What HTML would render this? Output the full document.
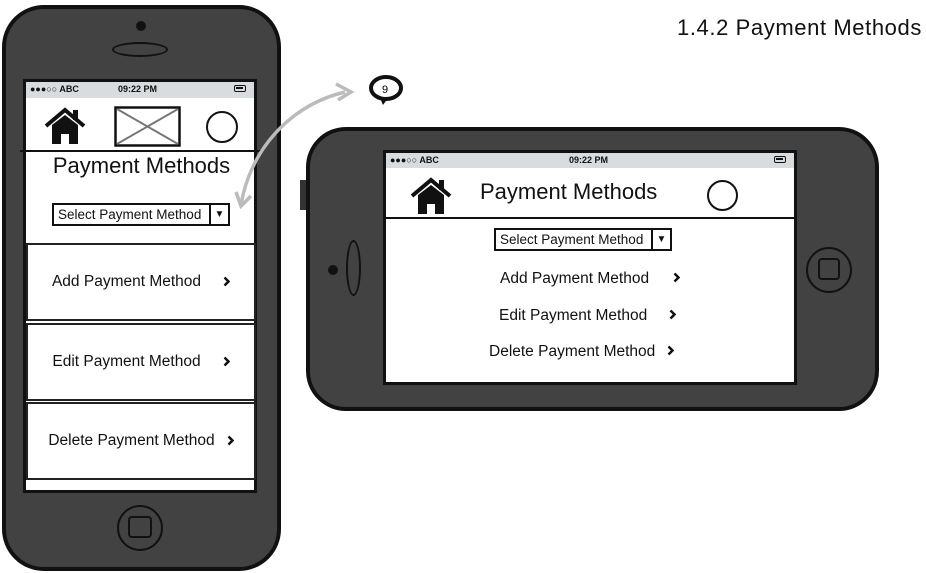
<!DOCTYPE html>
<html><head><meta charset="utf-8"><style>
body{margin:0;width:926px;height:573px;background:#fff;position:relative;overflow:hidden;font-family:"Liberation Sans",sans-serif;color:#111}
.a{position:absolute;box-sizing:border-box}
.phone{background:#424242;border:4px solid #111}
.scr{background:#fff;border:3px solid #111}
.sb{background:#d8dcdf;font-size:9px;line-height:15px;font-weight:bold}
.row{background:#fff;border:2px solid #222;font-size:15.5px;display:flex;align-items:center;justify-content:center}
.sel{border:2px solid #111;background:#fff;font-size:13.5px;line-height:19px;padding-left:4px}
.t{white-space:nowrap}
.c{display:inline-block;vertical-align:middle;position:relative;top:-1px}
</style></head><body>
<div class="a t" style="left:677px;top:15px;font-size:22px;letter-spacing:0.6px">1.4.2 Payment Methods</div>

<!-- portrait phone -->
<div class="a phone" style="left:2px;top:5px;width:279px;height:566px;border-radius:42px"></div>
<div class="a" style="left:136px;top:21px;width:10px;height:10px;border-radius:50%;background:#111"></div>
<div class="a" style="left:112px;top:42px;width:56px;height:15px;border-radius:50%;border:2.5px solid #111"></div>
<div class="a scr" style="left:23px;top:79px;width:234px;height:414px"></div>
<div class="a sb t" style="left:26px;top:82px;width:228px;height:16px;padding-left:4px">●●●○○ ABC<span style="position:absolute;left:92px">09:22 PM</span><span style="position:absolute;right:8px;top:3px;width:12px;height:7px;border:1.5px solid #111;border-radius:2px;box-sizing:border-box;background:linear-gradient(#111,#111) 1px 1px/7px 2px no-repeat"></span></div>
<svg class="a" style="left:43px;top:106px" width="45" height="40" viewBox="0 0 45 40"><path d="M3 20 L22 4 L41 20" stroke="#111" stroke-width="4" fill="none"/><path d="M9 19 L22 9 L35 19 V38 H26 V28 H18 V38 H9Z" fill="#111"/><rect x="30" y="4" width="5" height="10" fill="#111"/></svg>
<svg class="a" style="left:114px;top:106px" width="67" height="41"><rect x="1.5" y="1.5" width="64" height="38" fill="#fff" stroke="#111" stroke-width="2.5"/><path d="M3 3L64 38M64 3L3 38" stroke="#777" stroke-width="2"/></svg>
<div class="a" style="left:206px;top:111px;width:32px;height:32px;border-radius:50%;border:2px solid #111"></div>
<div class="a" style="left:20px;top:150px;width:243px;height:1.5px;background:#111"></div>
<div class="a t" style="left:26px;top:153px;width:231px;text-align:center;font-size:22px">Payment Methods</div>
<div class="a sel t" style="left:52px;top:203px;width:178px;height:23px">Select Payment Method<span style="position:absolute;right:0;top:0;width:17px;height:19px;border-left:2px solid #111;font-size:10px;text-align:center">▼</span></div>
<div class="a row t" style="left:26px;top:243px;width:230px;height:78px">Add Payment Method<svg class="c" style="margin-left:22px" width="7" height="11"><path d="M1.5 1.5L5.5 5.5L1.5 9.5" stroke="#111" stroke-width="2.5" fill="none"/></svg></div>
<div class="a row t" style="left:26px;top:323px;width:230px;height:78px">Edit Payment Method<svg class="c" style="margin-left:22px" width="7" height="11"><path d="M1.5 1.5L5.5 5.5L1.5 9.5" stroke="#111" stroke-width="2.5" fill="none"/></svg></div>
<div class="a row t" style="left:26px;top:402px;width:230px;height:78px">Delete Payment Method<svg class="c" style="margin-left:12px" width="7" height="11"><path d="M1.5 1.5L5.5 5.5L1.5 9.5" stroke="#111" stroke-width="2.5" fill="none"/></svg></div>
<div class="a" style="left:117px;top:505px;width:46px;height:46px;border-radius:50%;border:2.5px solid #111"></div>
<div class="a" style="left:128px;top:516px;width:24px;height:22px;border-radius:4px;border:2.5px solid #111"></div>

<!-- landscape phone -->
<div class="a phone" style="left:306px;top:127px;width:573px;height:284px;border-radius:40px"></div>
<div class="a" style="left:300px;top:180px;width:6px;height:30px;background:#333"></div>
<div class="a" style="left:328px;top:265px;width:10px;height:10px;border-radius:50%;background:#111"></div>
<div class="a" style="left:346px;top:240px;width:15px;height:56px;border-radius:50%;border:2.5px solid #111"></div>
<div class="a scr" style="left:383px;top:150px;width:414px;height:235px"></div>
<div class="a sb t" style="left:386px;top:153px;width:408px;height:15px;padding-left:4px">●●●○○ ABC<span style="position:absolute;left:183px">09:22 PM</span><span style="position:absolute;right:8px;top:3px;width:12px;height:7px;border:1.5px solid #111;border-radius:2px;box-sizing:border-box;background:linear-gradient(#111,#111) 1px 1px/7px 2px no-repeat"></span></div>
<svg class="a" style="left:409px;top:176px" width="45" height="40" viewBox="0 0 45 40"><path d="M3 20 L22 4 L41 20" stroke="#111" stroke-width="4" fill="none"/><path d="M9 19 L22 9 L35 19 V38 H26 V28 H18 V38 H9Z" fill="#111"/><rect x="30" y="4" width="5" height="10" fill="#111"/></svg>
<div class="a t" style="left:480px;top:179px;font-size:22px">Payment Methods</div>
<div class="a" style="left:707px;top:180px;width:31px;height:31px;border-radius:50%;border:2px solid #111"></div>
<div class="a" style="left:386px;top:217px;width:408px;height:1.5px;background:#111"></div>
<div class="a sel t" style="left:494px;top:228px;width:178px;height:23px">Select Payment Method<span style="position:absolute;right:0;top:0;width:17px;height:19px;border-left:2px solid #111;font-size:10px;text-align:center">▼</span></div>
<div class="a t" style="left:500px;top:270px;font-size:15.5px">Add Payment Method<svg class="c" style="margin-left:24px" width="7" height="11"><path d="M1.5 1.5L5.5 5.5L1.5 9.5" stroke="#111" stroke-width="2.5" fill="none"/></svg></div>
<div class="a t" style="left:499px;top:307px;font-size:15.5px">Edit Payment Method<svg class="c" style="margin-left:22px" width="7" height="11"><path d="M1.5 1.5L5.5 5.5L1.5 9.5" stroke="#111" stroke-width="2.5" fill="none"/></svg></div>
<div class="a t" style="left:489px;top:343px;font-size:15.5px">Delete Payment Method<svg class="c" style="margin-left:12px" width="7" height="11"><path d="M1.5 1.5L5.5 5.5L1.5 9.5" stroke="#111" stroke-width="2.5" fill="none"/></svg></div>
<div class="a" style="left:806px;top:247px;width:46px;height:46px;border-radius:50%;border:2.5px solid #111"></div>
<div class="a" style="left:818px;top:258px;width:22px;height:22px;border-radius:4px;border:2.5px solid #111"></div>

<!-- arrow + note -->
<svg class="a" style="left:0;top:0" width="926" height="573"><path d="M241 205 C250 150 290 105 345 92" stroke="#bbb" stroke-width="3.5" fill="none"/><path d="M336 84 L351 92 L338 100" stroke="#bbb" stroke-width="3.5" fill="none"/><path d="M236 192 L241 206 L251 196" stroke="#bbb" stroke-width="3.5" fill="none"/>
<ellipse cx="386" cy="88" rx="15" ry="11" fill="#fff" stroke="#111" stroke-width="4"/><path d="M380 98 L383 105 L388 98Z" fill="#111"/><text x="382" y="93" font-size="11" font-family="Liberation Sans">9</text></svg>
</body></html>
